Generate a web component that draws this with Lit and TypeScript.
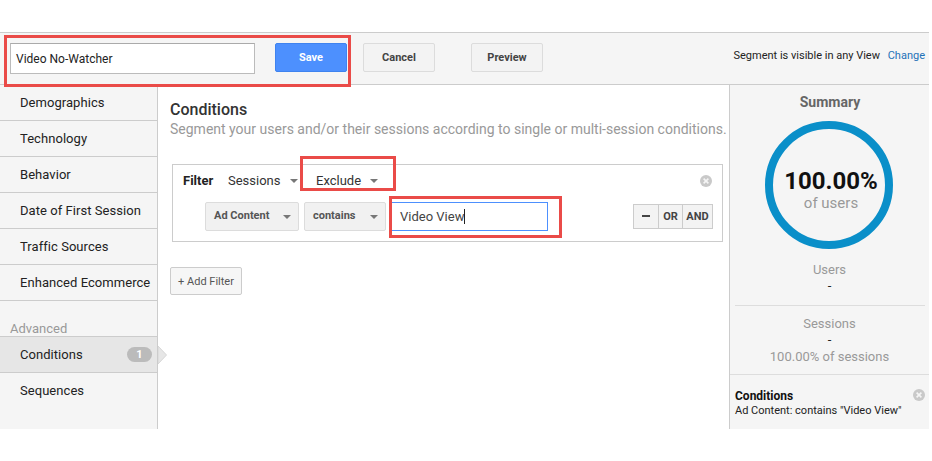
import { LitElement, html, css } from "lit";
import { customElement } from "lit/decorators.js";

const closeIcon = html`<svg class="x" viewBox="0 0 12 12" width="12" height="12"><circle cx="6" cy="6" r="6" fill="#c9c9c9"/><path d="M3.6 3.6l4.8 4.8M8.4 3.6l-4.8 4.8" stroke="#f5f5f5" stroke-width="1.6"/></svg>`;

@customElement("app-root")
export class AppRoot extends LitElement {
  static styles = css`
    :host { display: block; width: 932px; height: 461px; background: #fff; font-family: Roboto, "Liberation Sans", sans-serif; color: #222; position: relative; overflow: hidden; }
    * { box-sizing: border-box; }
    .app { width: 929px; margin-top: 32px; display: flex; flex-direction: column; }
    .toolbar { height: 53px; background: #f5f5f5; border-top: 1px solid #ccc; border-bottom: 1px solid #ccc; display: flex; align-items: flex-start; padding: 10px 4px 0 10px; }
    .name { width: 245px; height: 31px; background: #fff; border: 1px solid #bbb; border-top-color: #aaa; font-size: 12px; padding-left: 5px; display: flex; align-items: center; color: #222; }
    .btn { height: 29px; width: 72px; border: 1px solid #dcdcdc; border-radius: 2px; background: #f3f3f3; font-size: 11px; font-weight: 700; color: #444; display: flex; align-items: center; justify-content: center; padding-bottom: 1px; }
    .save { background: #4d90fe; border-color: #3f83ef; color: #fff; margin-left: 20px; }
    .cancel { margin-left: 16px; }
    .preview { margin-left: 36px; }
    .vis { margin-left: auto; font-size: 11px; color: #222; padding-top: 6px; }
    .vis a { color: #1f72b8; margin-left: 5px; }
    .body { height: 344px; display: flex; }
    .nav { width: 158px; flex: none; background: #f5f5f5; border-right: 1px solid #ccc; position: relative; }
    .row { height: 36px; border-bottom: 1px solid #ccc; padding-left: 20px; font-size: 13px; color: #222; display: flex; align-items: center; padding-bottom: 1px; letter-spacing: 0.05px; }
    .row.last { border-bottom: none; }
    .adv { height: 36px; border-bottom: 1px solid #ccc; padding-left: 10px; font-size: 13px; color: #999; display: flex; align-items: flex-end; padding-bottom: 0; line-height: 15px; }
    .row.on { background: #e6e6e6; position: relative; justify-content: space-between; padding-right: 5px; }
    .badge { width: 25px; height: 15px; border-radius: 8px; background: #bbb; color: #fff; font-size: 11px; font-weight: 700; display: flex; align-items: center; justify-content: center; }
    .arrow { position: absolute; right: -10px; top: 9px; width: 9px; height: 18px; }
    .main { width: 571px; flex: none; padding: 15px 0 0 12px; }
    h2 { margin: 0; font-size: 16px; line-height: 19px; font-weight: 500; color: #333; }
    .sub { font-size: 14px; line-height: 17px; color: #999; margin-top: 2px; white-space: nowrap; }
    .filter { margin-top: 26px; width: 551px; height: 78px; border: 1px solid #ccc; margin-left: 2px; padding: 0 9px 0 10px; }
    .f1 { height: 31px; display: flex; align-items: center; font-size: 13px; position: relative; }
    .f1 b { font-weight: 700; font-size: 13px; color: #222; width: 45px; }
    .drop { display: inline-flex; align-items: center; color: #333; }
    .tri { width: 0; height: 0; border-left: 4px solid transparent; border-right: 4px solid transparent; border-top: 4px solid #777; margin-left: 9px; }
    .sess { width: 88px; }
    .f1 .x { position: absolute; right: 1px; top: 10px; }
    .f2 { display: flex; align-items: flex-start; padding-left: 22px; margin-top: 6px; }
    .sel { height: 29px; background: #f1f1f1; border: 1px solid #dcdcdc; border-radius: 2px; font-size: 11px; font-weight: 700; color: #555; display: flex; align-items: center; justify-content: space-between; padding: 0 7px 3px 8px; }
    .sel .tri { margin-left: 0; margin-top: 4px; }
    .adc { width: 94px; }
    .con { width: 82px; margin-left: 5px; }
    .val { width: 157px; height: 29px; margin-left: 5px; border: 1px solid #4d90fe; background: #fff; font-size: 13px; color: #444; padding-left: 8px; display: flex; align-items: center; }
    .caret { width: 1px; height: 15px; background: #222; }
    .seg { margin-left: auto; margin-top: 2px; height: 25px; display: flex; border: 1px solid #ccc; background: #f3f3f3; font-size: 11px; font-weight: 700; color: #444; margin-right: 0; }
    .seg span { display: flex; align-items: center; justify-content: center; border-left: 1px solid #ccc; height: 100%; padding-bottom: 1px; }
    .seg span:first-child { border-left: none; width: 24px; }
    .minus { width: 8px; height: 2px; background: #444; }
    .seg .or { width: 24px; }
    .seg .and { width: 30px; }
    .add { margin: 25px 0 0 0; width: 72px; height: 28px; border: 1px solid #ccc; border-radius: 2px; background: #f6f6f6; font-size: 11px; color: #555; display: flex; align-items: center; justify-content: center; }
    .sum { flex: 1; background: #f5f5f5; border-left: 1px solid #ccc; display: flex; flex-direction: column; align-items: center; position: relative; }
    .sum h3 { margin: 9px 0 0 1px; font-size: 14px; line-height: 17px; font-weight: 700; color: #666; }
    .ring { width: 128px; height: 128px; margin-top: 10px; margin-right: 1px; border-radius: 50%; border: 8px solid #0a8fc9; display: flex; flex-direction: column; align-items: center; justify-content: center; padding: 10px 0 0 4px; }
    .pct { font-size: 24px; line-height: 25px; font-weight: 700; color: #111; }
    .of { font-size: 15px; line-height: 18px; color: #999; }
    .lab { font-size: 13px; line-height: 16px; color: #999; text-align: center; }
    .dash { font-size: 13px; line-height: 16.5px; color: #222; text-align: center; }
    .users { margin-top: 13px; width: 190px; height: 44px; border-bottom: 1px solid #ddd; }
    .sess2 { padding-top: 10px; height: 69px; width: 100%; border-bottom: 1px solid #ddd; }
    .cond { width: 100%; padding: 14px 0 0 5px; position: relative; }
    .cond b { display: block; font-size: 12px; line-height: 15px; color: #111; }
    .cond div { font-size: 11px; line-height: 13px; color: #222; white-space: nowrap; }
    .cond .x { position: absolute; right: 4px; top: 14px; }
    .red { position: absolute; border: 3px solid #ea4b48; pointer-events: none; }
    .r1 { left: 4px; top: 35px; width: 347px; height: 52px; }
    .r2 { left: 300px; top: 156px; width: 96px; height: 35px; }
    .r3 { left: 389px; top: 196px; width: 173px; height: 42px; }
  `;

  render() {
    return html`
      <div class="app">
        <div class="toolbar">
          <div class="name">Video No-Watcher</div>
          <div class="btn save">Save</div>
          <div class="btn cancel">Cancel</div>
          <div class="btn preview">Preview</div>
          <div class="vis">Segment is visible in any View <a>Change</a></div>
        </div>
        <div class="body">
          <div class="nav">
            <div class="row">Demographics</div>
            <div class="row">Technology</div>
            <div class="row">Behavior</div>
            <div class="row">Date of First Session</div>
            <div class="row">Traffic Sources</div>
            <div class="row">Enhanced Ecommerce</div>
            <div class="adv">Advanced</div>
            <div class="row on">Conditions <span class="badge">1</span>
              <svg class="arrow" viewBox="0 0 9 18"><path d="M0 0l8.5 9L0 18z" fill="#e6e6e6" stroke="#d6d6d6" stroke-width="1"/></svg>
            </div>
            <div class="row last">Sequences</div>
          </div>
          <div class="main">
            <h2>Conditions</h2>
            <div class="sub">Segment your users and/or their sessions according to single or multi-session conditions.</div>
            <div class="filter">
              <div class="f1">
                <b>Filter</b>
                <span class="drop sess">Sessions<i class="tri"></i></span>
                <span class="drop">Exclude<i class="tri"></i></span>
                ${closeIcon}
              </div>
              <div class="f2">
                <div class="sel adc">Ad Content<i class="tri"></i></div>
                <div class="sel con">contains<i class="tri"></i></div>
                <div class="val">Video View<i class="caret"></i></div>
                <div class="seg"><span><i class="minus"></i></span><span class="or">OR</span><span class="and">AND</span></div>
              </div>
            </div>
            <div class="add">+ Add Filter</div>
          </div>
          <div class="sum">
            <h3>Summary</h3>
            <div class="ring"><div class="pct">100.00%</div><div class="of">of users</div></div>
            <div class="users"><div class="lab">Users</div><div class="dash">-</div></div>
            <div class="sess2"><div class="lab">Sessions</div><div class="dash">-</div><div class="lab">100.00% of sessions</div></div>
            <div class="cond"><b>Conditions</b><div>Ad Content: contains "Video View"</div>${closeIcon}</div>
          </div>
        </div>
      </div>
      <div class="red r1"></div>
      <div class="red r2"></div>
      <div class="red r3"></div>
    `;
  }
}
